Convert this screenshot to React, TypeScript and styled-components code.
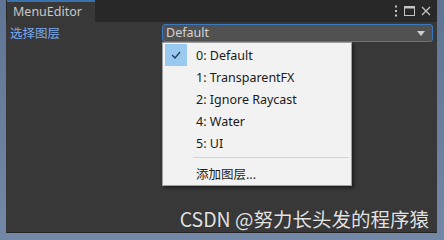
import styled, { createGlobalStyle } from 'styled-components';

const GlobalStyle = createGlobalStyle`
  html, body {
    margin: 0;
    padding: 0;
    background: #6d82a0;
  }
  body {
    font-family: "Noto Sans", "Noto Sans CJK SC", sans-serif;
  }
`;

const Screen = styled.div`
  width: 444px;
  height: 240px;
  padding: 0 7px 7px 6px;
  box-sizing: border-box;
  background: linear-gradient(180deg, #5f7593 0%, #7388a6 100%);
  display: flex;
`;

const Window = styled.div`
  flex: 1;
  display: flex;
  flex-direction: column;
  background: #383838;
  border-bottom: 1px solid #232323;
  position: relative;
`;

const TabBar = styled.div`
  height: 22px;
  background: #282828;
  display: flex;
  align-items: stretch;
  justify-content: space-between;
`;

const Tab = styled.div`
  width: 88px;
  margin-left: 1px;
  box-sizing: border-box;
  border-top: 2px solid #3a72b0;
  background: #383838;
  color: #c8c8c8;
  font-family: "Noto Sans", sans-serif;
  font-size: 12.5px;
  line-height: 20px;
  padding-left: 6px;
`;

const Controls = styled.div`
  display: flex;
  align-items: center;
  gap: 6px;
  padding-right: 6px;
  color: #c4c4c4;
`;

const Row = styled.div`
  display: flex;
  align-items: center;
  height: 18px;
  margin-top: 2px;
  padding: 0 4px 0 4px;
`;

const Label = styled.div`
  width: 152px;
  color: #7aaaf0;
  font-family: "Noto Sans CJK SC", sans-serif;
  font-size: 12.5px;
  line-height: 18px;
`;

const Select = styled.div`
  flex: 1;
  height: 18px;
  box-sizing: border-box;
  border: 1px solid #3b7ac0;
  border-radius: 3px;
  background: #515151;
  color: #d4d4d4;
  font-family: "Noto Sans", sans-serif;
  font-size: 12.5px;
  line-height: 16px;
  padding: 0 7px 0 3px;
  display: flex;
  align-items: center;
  justify-content: space-between;
`;

const Arrow = styled.div`
  width: 0;
  height: 0;
  border-left: 4px solid transparent;
  border-right: 4px solid transparent;
  border-top: 5px solid #cfcfcf;
`;

const Menu = styled.div`
  position: absolute;
  left: 156px;
  top: 42px;
  width: 190px;
  box-sizing: border-box;
  padding: 1px 2px 1px 2px;
  background: #f2f2f2;
  border: 1px solid #a0a0a0;
  box-shadow: 2px 2px 3px rgba(0, 0, 0, 0.45);
  font-family: "Noto Sans", "Noto Sans CJK SC", sans-serif;
  font-size: 12.5px;
  color: #1a1a1a;
`;

const Item = styled.div`
  display: flex;
  align-items: center;
  height: 22px;
`;

const CheckBox = styled.div<{ $on?: boolean }>`
  width: 22px;
  height: 22px;
  margin-right: 9px;
  background: ${(p) => (p.$on ? '#99c9ef' : 'transparent')};
  display: flex;
  align-items: center;
  justify-content: center;
`;

const Separator = styled.div`
  height: 1px;
  margin: 3px 0 4px 28px;
  background: #d4d4d4;
`;

const Watermark = styled.div`
  position: absolute;
  right: 8px;
  bottom: 1px;
  color: #e2e2e2;
  font-family: "Noto Sans CJK SC", sans-serif;
  font-size: 19.5px;
  line-height: 24px;
  text-shadow: 0 0 1px rgba(0, 0, 0, 0.4);
`;

const layers = ['0: Default', '1: TransparentFX', '2: Ignore Raycast', '4: Water', '5: UI'];

export default function App() {
  return (
    <>
      <GlobalStyle />
      <Screen>
        <Window>
          <TabBar>
            <Tab>MenuEditor</Tab>
            <Controls>
              <svg width="4" height="12" viewBox="0 0 4 12">
                <rect x="1" y="0.5" width="2" height="2" fill="currentColor" />
                <rect x="1" y="5" width="2" height="2" fill="currentColor" />
                <rect x="1" y="9.5" width="2" height="2" fill="currentColor" />
              </svg>
              <svg width="11" height="10" viewBox="0 0 11 10">
                <rect x="0.5" y="0.5" width="10" height="9" fill="none" stroke="currentColor" />
                <rect x="0.5" y="0.5" width="10" height="2" fill="currentColor" />
              </svg>
              <svg width="10" height="10" viewBox="0 0 10 10">
                <path d="M1 1 L9 9 M9 1 L1 9" stroke="currentColor" strokeWidth="1.3" />
              </svg>
            </Controls>
          </TabBar>
          <Row>
            <Label>选择图层</Label>
            <Select>
              <span>Default</span>
              <Arrow />
            </Select>
          </Row>
          <Menu>
            {layers.map((l, i) => (
              <Item key={l}>
                <CheckBox $on={i === 0}>
                  {i === 0 && (
                    <svg width="10" height="8" viewBox="0 0 10 8">
                      <path d="M1 4 L4 7 L9 1" fill="none" stroke="#1f3b5a" strokeWidth="1.3" />
                    </svg>
                  )}
                </CheckBox>
                {l}
              </Item>
            ))}
            <Separator />
            <Item>
              <CheckBox />
              添加图层...
            </Item>
          </Menu>
          <Watermark>CSDN @努力长头发的程序猿</Watermark>
        </Window>
      </Screen>
    </>
  );
}
